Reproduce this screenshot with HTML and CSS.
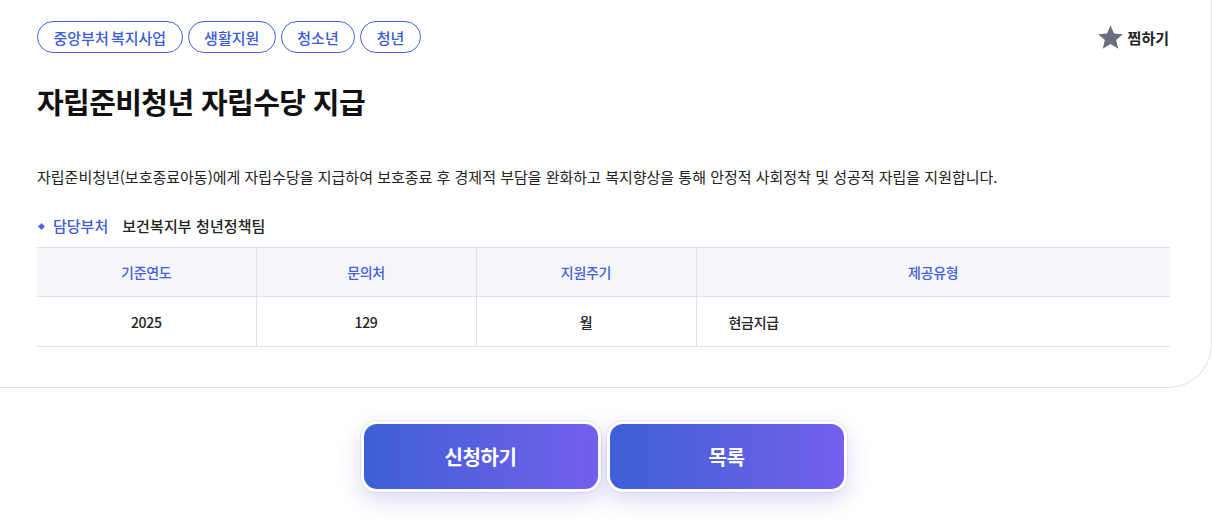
FILE: index.html
```html
<!DOCTYPE html>
<html lang="ko">
<head>
<meta charset="utf-8">
<title>자립준비청년 자립수당 지급</title>
<link rel="stylesheet" href="styles.css">
</head>
<body>
<div class="card">
  <div class="top">
    <div class="tags">
      <span class="tag">중앙부처 복지사업</span>
      <span class="tag">생활지원</span>
      <span class="tag">청소년</span>
      <span class="tag">청년</span>
    </div>
    <button class="fav">
      <svg width="27" height="27" viewBox="0 0 24 24"><path d="M12 1l3.1 7.35 7.9.65-6 5.2 1.85 7.8L12 17.85 5.15 22l1.85-7.8-6-5.2 7.9-.65z" fill="#6b6d80"/></svg>
      <span>찜하기</span>
    </button>
  </div>
  <h1 class="title">자립준비청년 자립수당 지급</h1>
  <p class="desc">자립준비청년(보호종료아동)에게 자립수당을 지급하여 보호종료 후 경제적 부담을 완화하고 복지향상을 통해 안정적 사회정착 및 성공적 자립을 지원합니다.</p>
  <div class="dept">
    <span class="dot"></span>
    <span class="dept-label">담당부처</span>
    <span class="dept-value">보건복지부 청년정책팀</span>
  </div>
  <table class="info">
    <colgroup>
      <col class="c1"><col class="c2"><col class="c3"><col>
    </colgroup>
    <thead>
      <tr><th>기준연도</th><th>문의처</th><th>지원주기</th><th>제공유형</th></tr>
    </thead>
    <tbody>
      <tr><td>2025</td><td>129</td><td>월</td><td class="left">현금지급</td></tr>
    </tbody>
  </table>
</div>
<div class="actions">
  <button class="btn">신청하기</button>
  <button class="btn">목록</button>
</div>
</body>
</html>
```

FILE: styles.css
```css
* { box-sizing: border-box; }
html, body { margin: 0; padding: 0; background: #fff; }
body {
  font-family: "Noto Sans CJK KR", "Noto Sans", sans-serif;
  color: #1e1e1e;
  width: 1212px;
  height: 524px;
  overflow: hidden;
}
.card {
  width: 1212px;
  border-right: 1px solid #e1e1e4;
  border-bottom: 1px solid #e1e1e4;
  border-bottom-right-radius: 44px;
  padding: 21px 41px 40px 37px;
}
.top {
  display: flex;
  justify-content: space-between;
  align-items: center;
}
.tags { display: flex; gap: 5px; }
.tag {
  display: inline-flex;
  align-items: center;
  height: 32px;
  padding: 0 15.5px;
  border: 1px solid #4363dd;
  border-radius: 16px;
  color: #3d5bd6;
  font-size: 15px;
  font-weight: 500;
  word-spacing: -2px;
}
.fav {
  display: flex;
  align-items: center;
  gap: 4px;
  background: none;
  border: 0;
  padding: 0;
  font-family: inherit;
  font-size: 15px;
  font-weight: 700;
  color: #222;
  margin-right: 1px;
}
.title {
  margin: 28px 0 0;
  font-size: 29px;
  font-weight: 700;
  letter-spacing: -0.6px;
  color: #111;
  line-height: 40px;
}
.desc {
  margin: 45px 0 0;
  font-size: 15px;
  line-height: 22px;
  color: #222;
}
.dept {
  display: flex;
  align-items: center;
  margin-top: 27px;
  font-size: 15px;
  font-weight: 500;
  line-height: 22px;
}
.dot {
  width: 5px; height: 5px;
  background: #4a66e0;
  transform: rotate(45deg);
  margin: 0 9px 0 2px;
}
.dept-label { color: #3d5bd6; margin-right: 14px; }
.dept-value { color: #222; letter-spacing: 0.1px; }
.info {
  width: 100%;
  margin-top: 10px;
  border-collapse: collapse;
  border-top: 1px solid #e2e2e6;
  font-size: 14px;
  letter-spacing: -0.3px;
}
.info .c1 { width: 219px; }
.info .c2 { width: 220px; }
.info .c3 { width: 220px; }
.info th, .info td {
  border-bottom: 1px solid #e2e2e6;
  border-left: 1px solid #e2e2e6;
  text-align: center;
  padding: 0;
}
.info th:first-child, .info td:first-child { border-left: 0; }
.info th {
  height: 49px;
  background: #f5f6fa;
  color: #4461dc;
  font-weight: 500;
}
.info td {
  height: 50px;
  color: #222;
  font-weight: 500;
}
.info td.left { text-align: left; padding-left: 32px; }
.actions {
  display: flex;
  justify-content: center;
  gap: 6px;
  margin-top: 33px;
  padding-right: 5px;
}
.btn {
  width: 240px;
  height: 71px;
  border: 3px solid #fff;
  border-radius: 16px;
  background: linear-gradient(90deg, #3d5fd7 0%, #7460ec 100%);
  color: #fff;
  font-family: inherit;
  font-size: 20px;
  font-weight: 700;
  letter-spacing: -0.4px;
  box-shadow: 0 8px 22px rgba(80, 80, 190, 0.22), 0 0 0 1px rgba(215, 215, 240, 0.45);
}
```
